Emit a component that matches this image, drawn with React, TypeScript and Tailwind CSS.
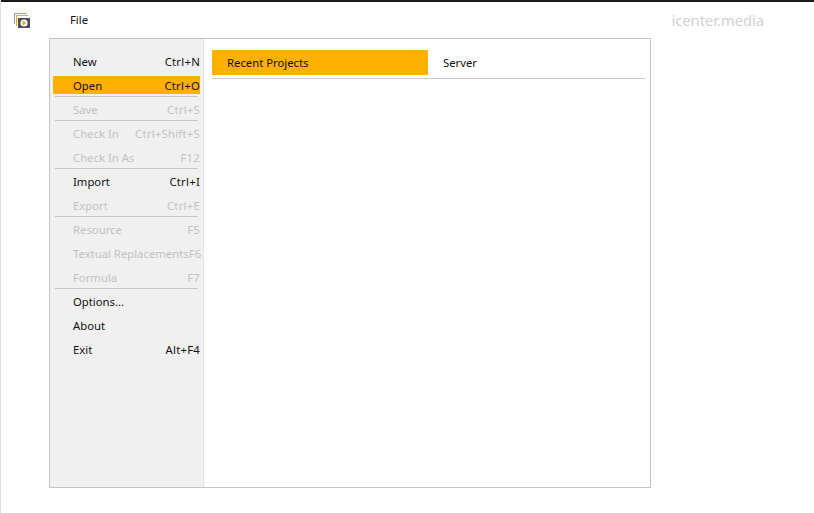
const font = "[font-family:'Noto_Sans',sans-serif]"

type MenuItem = {
  label: string
  shortcut?: string
  disabled?: boolean
  active?: boolean
  divider?: boolean
}

const menuItems: MenuItem[] = [
  { label: "New", shortcut: "Ctrl+N" },
  { label: "Open", shortcut: "Ctrl+O", active: true, divider: true },
  { label: "Save", shortcut: "Ctrl+S", disabled: true, divider: true },
  { label: "Check In", shortcut: "Ctrl+Shift+S", disabled: true },
  { label: "Check In As", shortcut: "F12", disabled: true, divider: true },
  { label: "Import", shortcut: "Ctrl+I" },
  { label: "Export", shortcut: "Ctrl+E", disabled: true, divider: true },
  { label: "Resource", shortcut: "F5", disabled: true },
  { label: "Textual Replacements", shortcut: "F6", disabled: true },
  { label: "Formula", shortcut: "F7", disabled: true, divider: true },
  { label: "Options..." },
  { label: "About" },
  { label: "Exit", shortcut: "Alt+F4" },
]

function AppIcon() {
  return (
    <svg width="17" height="15" viewBox="0 0 17 15" fill="none">
      <path d="M0.5 11V0.5H12" stroke="#9a9a9a" />
      <path d="M2.5 13V2.5H14" stroke="#f5a800" />
      <rect x="4" y="5" width="12" height="10" fill="#4b4f57" />
      <circle cx="10" cy="10" r="3.6" fill="#ffffff" />
      <path d="M8.6 7.6L12.2 10L8.6 12.4Z" fill="#f5a800" />
    </svg>
  )
}

export default function App() {
  return (
    <div className={`${font} w-[814px] h-[513px] overflow-hidden bg-white text-[11.3px] text-[#111] border-l border-[#e0e0e0]`}>
      <div className="h-[2px] bg-[#1a1a1a] -ml-px" />

      <header className="h-[36px] flex items-center pl-[13px] pr-[50px]">
        <AppIcon />
        <span className="ml-[39px]">File</span>
        <span className="ml-auto text-[14.7px] text-[#d0d0d0]">icenter.media</span>
      </header>

      <div className="ml-[48px] w-[602px] h-[450px] flex border border-[#c4c4c4]">
        <nav className="w-[154px] bg-[#f0f0f0] border-r border-[#e4e4e4] pt-[11px] pl-[3px]">
          {menuItems.map((item) => (
            <div key={item.label} className="h-[24px] pt-[2px]">
              <div
                className={`h-[18px] w-[147px] pl-[20px] pt-[2px] flex items-center justify-between whitespace-nowrap ${
                  item.active ? "bg-[#ffb000]" : ""
                } ${item.disabled ? "text-[#c2c2c2]" : ""}`}
              >
                <span>{item.label}</span>
                <span className="tracking-[0.25px]">{item.shortcut}</span>
              </div>
              {item.divider && <div className="h-px w-[143px] ml-[2px] mt-[2px] bg-[#c6c6c6]" />}
            </div>
          ))}
        </nav>

        <main className="flex-1 bg-white pt-[11px] pl-[8px] pr-[5px]">
          <div className="flex h-[28px] border-b border-[#c8c8c8] box-content">
            <div className="w-[216px] h-[25px] pl-[15px] pt-px flex items-center bg-[#ffb000]">Recent Projects</div>
            <div className="h-[25px] pl-[15px] pt-px flex items-center">Server</div>
          </div>
        </main>
      </div>
    </div>
  )
}
